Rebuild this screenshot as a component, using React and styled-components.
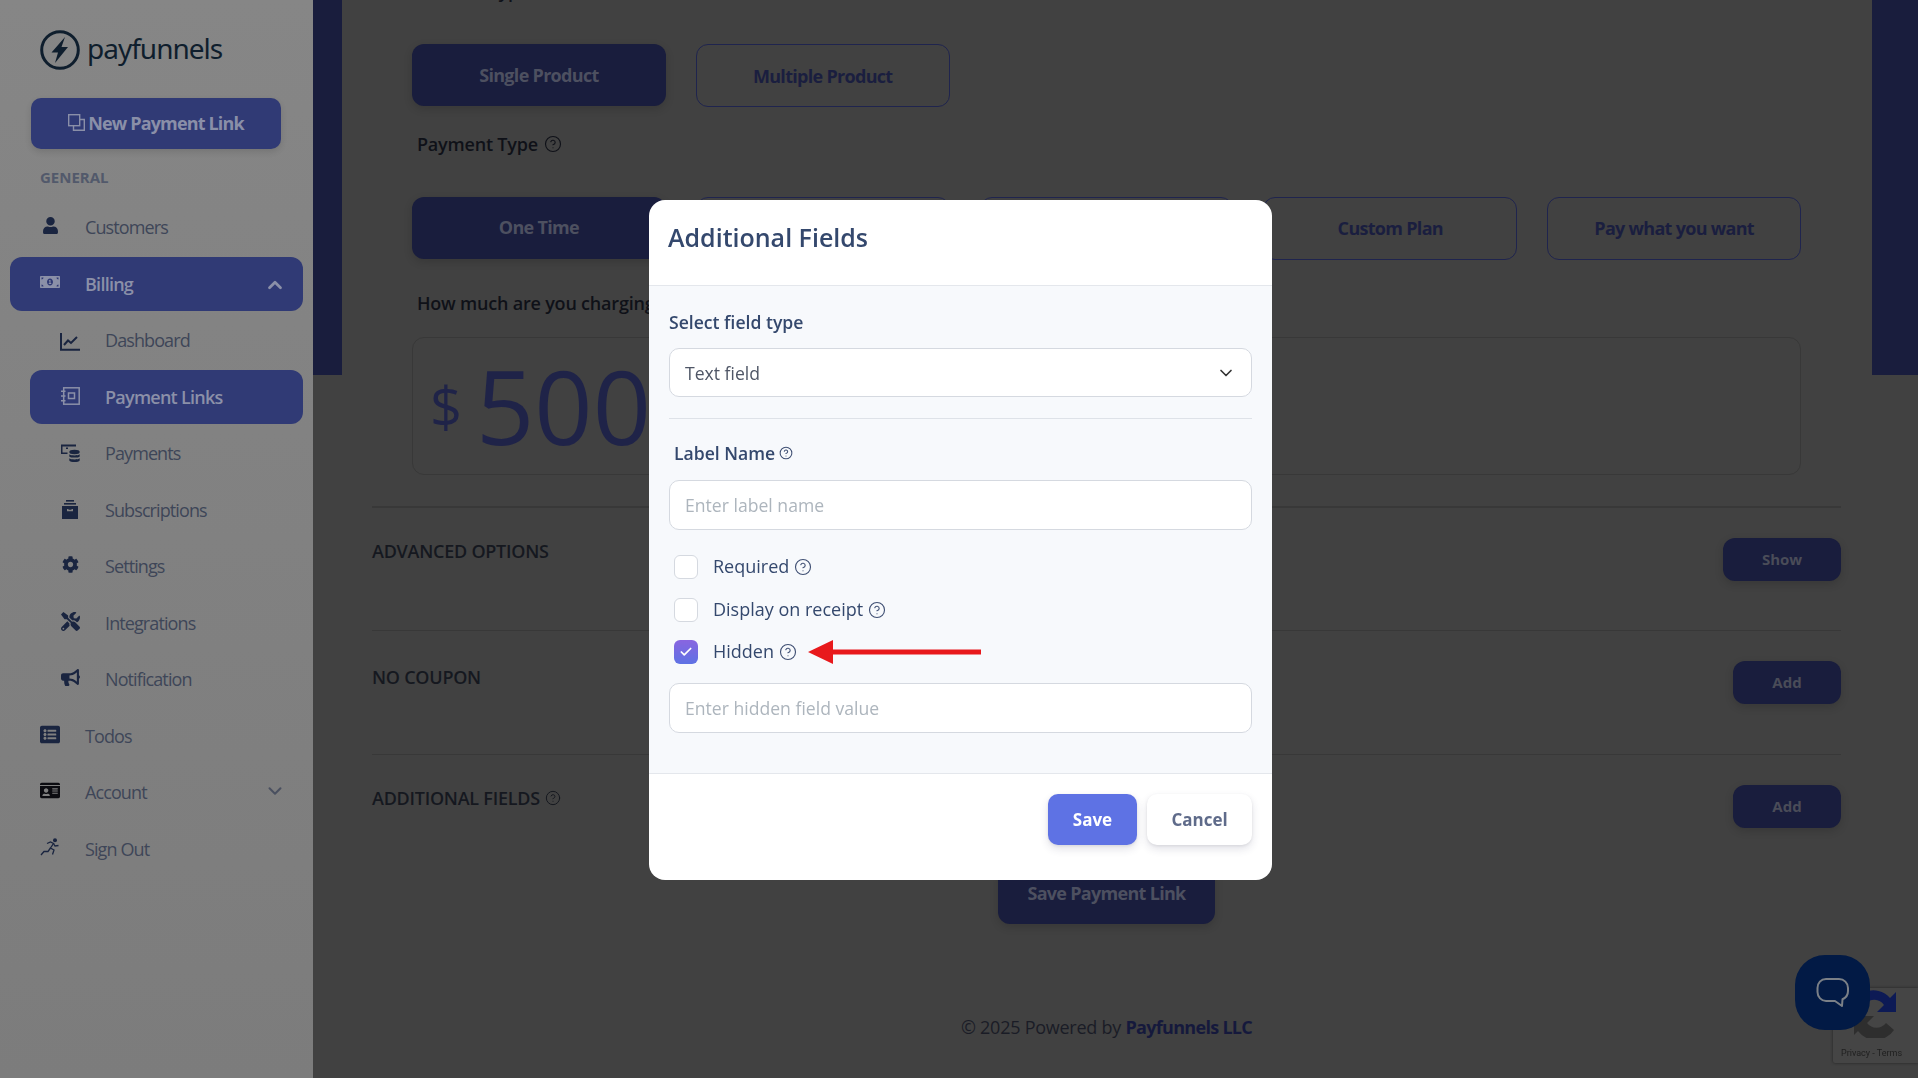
import React from 'react'
import styled, { createGlobalStyle } from 'styled-components'
import {
  FaUser,
  FaMoneyBillAlt,
  FaCog,
  FaTools,
  FaBullhorn,
  FaListAlt,
  FaIdCard,
} from 'react-icons/fa'
import { ChevronDown, ChevronUp, CircleHelp, Check } from 'lucide-react'

const GlobalStyle = createGlobalStyle`
  html, body {
    margin: 0;
    height: 100%;
    overflow: hidden;
    background: #414141;
  }
  * { box-sizing: border-box; }
  body {
    font-family: 'Open Sans', 'Noto Sans', sans-serif;
  }
`

const BAND = '#191d3d'
const DIM_BLUE = '#303a75'

const Page = styled.div`
  display: flex;
  width: 1918px;
  height: 1078px;
  overflow: hidden;
`

const Sidebar = styled.aside`
  flex: 0 0 313px;
  display: flex;
  flex-direction: column;
  background: linear-gradient(#868686, #7c7c7c);
  padding-top: 30px;
`

const Logo = styled.div`
  display: flex;
  align-items: center;
  gap: 7px;
  height: 40px;
  margin-left: 40px;
`

const LogoText = styled.span`
  font-family: 'Noto Sans', sans-serif;
  font-size: 28px;
  line-height: 40px;
  letter-spacing: -1px;
  margin-top: -4px;
  color: #0f1e2d;
`

const NewLinkButton = styled.div`
  display: flex;
  align-items: center;
  justify-content: center;
  gap: 3px;
  width: 250px;
  height: 51px;
  margin: 28px 0 0 31px;
  padding-bottom: 2px;
  background: ${DIM_BLUE};
  border-radius: 10px;
  box-shadow: 0 3px 6px rgba(0, 0, 0, 0.12);
  color: #8a8fa8;
  font-size: 18px;
  font-weight: 700;
  letter-spacing: -0.85px;
`

const SectionTitle = styled.div`
  margin: 18px 0 12px 40px;
  font-size: 15px;
  line-height: 21px;
  font-weight: 700;
  color: #52596b;
`

const NavItem = styled.div`
  display: flex;
  align-items: center;
  height: 54px;
  margin: 0 10px 2.5px ${(p) => (p.$sub ? '30px' : '10px')};
  padding: 0 17px 0 30px;
  border-radius: 12px;
  background: ${(p) => (p.$active ? DIM_BLUE : 'transparent')};
  color: ${(p) => (p.$active ? '#8b90a8' : '#3e4658')};
  font-size: 18px;
  font-weight: ${(p) => (p.$active ? 600 : 400)};
  letter-spacing: ${(p) => (p.$active ? '-0.75px' : '-0.9px')};
`

const NavIcon = styled.span`
  display: flex;
  align-items: center;
  justify-content: center;
  flex: 0 0 20px;
  min-width: 0;
  height: 20px;
  margin: -3px 25px 0 0;
  color: ${(p) => p.$color || '#1a2540'};
`

const NavChevron = styled.span`
  display: flex;
  margin: ${(p) => (p.$active ? '3px' : '-3px')} 0 0 auto;
  color: ${(p) => (p.$active ? '#8b90a8' : '#4a5060')};
`

const Main = styled.main`
  flex: 1;
  background: linear-gradient(${BAND}, ${BAND}) no-repeat top / 100% 375px, #414141;
  padding: 0 46px 0 29px;
`

const Panel = styled.div`
  background: #414141;
  padding: 0 31px 0 30px;
  margin-top: -21px;
  height: calc(100% + 21px);
`

const TopBlock = styled.div`
  padding: 0 40px;
`

const FieldLabel = styled.div`
  display: flex;
  align-items: center;
  gap: 6px;
  height: 24px;
  margin: ${(p) => p.$margin};
  padding-left: 5px;
  color: #0f1118;
  font-size: 18px;
  font-weight: 600;
  letter-spacing: -0.2px;
`

const ChoiceRow = styled.div`
  display: flex;
  align-items: flex-start;
  gap: 30px;
  height: 63px;
`

const Choice = styled.div`
  flex: 0 0 253.8px;
  display: flex;
  align-items: center;
  justify-content: center;
  height: ${(p) => (p.$selected ? '62px' : '63px')};
  padding-bottom: ${(p) => (p.$lift ? '2px' : '0')};
  border-radius: 12px;
  border: ${(p) => (p.$selected ? 'none' : '1px solid #1f244e')};
  background: ${(p) => (p.$selected ? BAND : 'transparent')};
  box-shadow: ${(p) => (p.$selected ? '0 3px 8px rgba(0, 0, 0, 0.15)' : 'none')};
  color: ${(p) => (p.$selected ? '#4d5060' : '#1a1e3f')};
  font-size: 18px;
  font-weight: 700;
  letter-spacing: -0.7px;
`

const AmountBox = styled.div`
  display: flex;
  align-items: center;
  height: 138px;
  margin-top: 22px;
  padding-left: 17px;
  border: 1px solid #383838;
  border-radius: 12px;
  color: #1f2348;
`

const Currency = styled.span`
  font-size: 56px;
  margin-right: 14px;
`

const Amount = styled.span`
  font-size: 102px;
  line-height: 138px;
`

const OptionRow = styled.div`
  display: flex;
  align-items: flex-start;
  justify-content: space-between;
  height: ${(p) => p.$height};
  margin-top: ${(p) => p.$top || 0};
  padding-top: 30px;
  border-top: ${(p) => p.$border || '1px'} solid #383838;
`

const OptionLabel = styled.div`
  display: flex;
  align-items: center;
  gap: 5px;
  margin-top: ${(p) => p.$drop};
  line-height: 24px;
  color: #15181f;
  font-size: 18px;
  font-weight: 600;
  letter-spacing: -0.25px;
`

const OptionButton = styled.div`
  display: flex;
  align-items: center;
  justify-content: center;
  width: ${(p) => p.$width};
  height: 43px;
  padding-bottom: 2px;
  border-radius: 12px;
  background: ${BAND};
  box-shadow: 0 3px 8px rgba(0, 0, 0, 0.15);
  color: #4a4c58;
  font-size: 15px;
  font-weight: 700;
`

const SaveLinkButton = styled.div`
  display: flex;
  align-items: center;
  justify-content: center;
  width: 217px;
  height: 62px;
  margin: 0 auto;
  border-radius: 12px;
  background: ${BAND};
  box-shadow: 0 3px 8px rgba(0, 0, 0, 0.15);
  color: #4d5060;
  font-size: 18px;
  font-weight: 700;
  letter-spacing: -0.7px;
`

const Footer = styled.footer`
  margin-top: 91px;
  text-align: center;
  font-size: 18px;
  line-height: 24px;
  letter-spacing: -0.25px;
  color: #1a1c26;

  b {
    color: #15193c;
    font-weight: 700;
    letter-spacing: -0.7px;
  }
`

const Modal = styled.div`
  position: fixed;
  left: 649px;
  top: 200px;
  width: 623px;
  height: 680px;
  display: flex;
  flex-direction: column;
  overflow: hidden;
  background: #fff;
  border-radius: 16px;
`

const ModalHeader = styled.div`
  flex: 0 0 86px;
  display: flex;
  align-items: flex-start;
  padding: 19px 19px 0;
  border-bottom: 1px solid #e4e7ec;
`

const ModalTitle = styled.h2`
  margin: 0;
  font-size: 25px;
  line-height: 36px;
  font-weight: 600;
  color: #34486d;
`

const ModalBody = styled.div`
  flex: 1;
  padding: 24px 20px 0;
  background: #f7f9fc;
`

const ModalLabel = styled.div`
  display: flex;
  align-items: center;
  gap: 4px;
  height: 24px;
  padding-left: ${(p) => (p.$inset ? '5px' : '0')};
  font-size: 17.6px;
  font-weight: 600;
  color: #34486d;
`

const SelectBox = styled.div`
  display: flex;
  align-items: center;
  justify-content: space-between;
  height: 49px;
  margin-top: 14px;
  padding: 0 15px;
  background: #fff;
  border: 1px solid #d5d9e0;
  border-radius: 10px;
  font-size: 17.6px;
  color: #4f5666;
`

const Rule = styled.hr`
  margin: 21px 0 22px;
  border: 0;
  border-top: 1px solid #dee2e8;
`

const TextInput = styled.input`
  display: block;
  width: 100%;
  height: 50px;
  margin-top: ${(p) => p.$top};
  padding: 0 15px;
  background: #fff;
  border: 1px solid #d5d9e0;
  border-radius: 10px;
  font-family: inherit;
  font-size: 17.6px;

  &::placeholder {
    color: #adb5bd;
    opacity: 1;
  }
`

const CheckList = styled.div`
  margin-top: 16px;
  padding-left: 5px;
`

const CheckRow = styled.div`
  display: flex;
  align-items: center;
  height: 42.5px;
  color: #34486d;
  font-size: 18px;
  font-weight: 500;
`

const CheckText = styled.span`
  margin-top: -2px;
`

const CheckBox = styled.span`
  display: flex;
  align-items: center;
  justify-content: center;
  flex: 0 0 24px;
  height: 24px;
  margin-right: 15px;
  border-radius: 6px;
  border: ${(p) => (p.$checked ? 'none' : '1px solid #d5d9e0')};
  background: ${(p) =>
    p.$checked ? 'linear-gradient(#8965e0, #5e72e4)' : '#fff'};
  color: #fff;
`

const Help = styled(CircleHelp)`
  flex: none;
  margin-left: ${(p) => p.$gap || '5px'};
  color: #3f4f73;
`

const RedArrow = styled.svg`
  flex: none;
  margin-left: 11px;
`

const ModalFooter = styled.div`
  flex: 0 0 107px;
  display: flex;
  justify-content: flex-end;
  gap: 10px;
  padding: 20px 20px 0;
  border-top: 1px solid #e4e7ec;
`

const ModalButton = styled.div`
  display: flex;
  align-items: center;
  justify-content: center;
  width: ${(p) => p.$width};
  height: 51px;
  border-radius: 10px;
  background: ${(p) => (p.$primary ? '#5e72e4' : '#fff')};
  box-shadow: 0 4px 8px rgba(50, 50, 93, 0.14), 0 1px 3px rgba(0, 0, 0, 0.08);
  color: ${(p) => (p.$primary ? '#fff' : '#5f6b8a')};
  font-size: 17px;
  font-weight: 700;
`

const Recaptcha = styled.div`
  position: fixed;
  left: 1833px;
  top: 988px;
  width: 85px;
  height: 75px;
  display: flex;
  flex-direction: column;
  align-items: center;
  background: #454545;
  border-radius: 2px 0 0 2px;
  box-shadow: 0 0 3px rgba(0, 0, 0, 0.5);
`

const RecaptchaLinks = styled.div`
  position: absolute;
  bottom: 3px;
  left: 8px;
  font-family: 'Roboto', sans-serif;
  font-size: 9px;
  line-height: 14px;
  white-space: nowrap;
  color: #1f1f1f;
`

const ChatBubble = styled.div`
  position: fixed;
  left: 1795px;
  top: 955px;
  width: 75px;
  height: 75px;
  display: flex;
  align-items: center;
  justify-content: center;
  border-radius: 30px;
  background: #021a45;
`

const ChartIcon = () => (
  <svg width="20" height="18" viewBox="0 0 20 18" fill="none" stroke="currentColor" style={{ marginTop: 6 }}>
    <path d="M1 0v16.800h19" strokeWidth="2" />
    <path d="M4 12l4-4.500 3 2.500 6-6" strokeWidth="2" />
  </svg>
)

const PaymentLinkIcon = () => (
  <svg width="19" height="18" viewBox="0 0 19 18" fill="none" stroke="currentColor" style={{ marginTop: 2 }}>
    <rect x="2.700" y="0.800" width="15.500" height="16.400" strokeWidth="1.500" />
    <rect x="7.500" y="6" width="6" height="5.500" strokeWidth="1.500" />
    <path d="M0 4.200h4.500M0 9h4.500M0 13.800h4.500" strokeWidth="1.500" />
  </svg>
)

const PaymentsIcon = () => (
  <svg width="19" height="19" viewBox="0 0 19 19" fill="currentColor" style={{ marginTop: 3 }}>
    <path d="M0 0.500h15v2H1.500v6h5v1.500H0z" />
    <rect x="5" y="3.500" width="2" height="1.500" />
    <ellipse cx="13.500" cy="8" rx="5.200" ry="2.200" />
    <path d="M8.300 10.200c1 1.600 9.400 1.600 10.400 0v2.200c-1 1.600-9.400 1.600-10.400 0z" />
    <path d="M8.300 14.200c1 1.600 9.400 1.600 10.400 0v2.400c-1 2-9.400 2-10.400 0z" />
  </svg>
)

const ArchiveIcon = () => (
  <svg width="16" height="19" viewBox="0 0 16 19" fill="currentColor" style={{ marginTop: 3 }}>
    <rect x="4" y="0" width="8" height="1.600" />
    <rect x="2" y="3" width="12" height="1.600" />
    <path d="M0 6h16v13H0zM5 9v2.200h6V9H9.500v.8h-3V9z" fillRule="evenodd" />
  </svg>
)

const RunnerIcon = () => (
  <svg width="20" height="18" viewBox="0 0 20 18" fill="none" stroke="currentColor" strokeWidth="1.300">
    <circle cx="15" cy="2.200" r="2" fill="currentColor" stroke="none" />
    <path d="M7 5.500l3.500-1.500 3 1.500-3 4.500 3.500 2-1.500 4.500" />
    <path d="M13.500 5.500l1.500 2.500 3.500-.5" />
    <path d="M10.500 10l-2.500 3.500H4L1 17" />
  </svg>
)

const NewLinkIcon = () => (
  <svg width="17" height="17" viewBox="0 0 17 17" fill="none" stroke="currentColor" strokeWidth="1.400">
    <rect x="0.700" y="0.700" width="11" height="11" />
    <path d="M5.500 11.700v4.600h10.800V5.500h-4.600" />
  </svg>
)

const LogoMark = () => (
  <svg width="40" height="40" viewBox="0 0 40 40">
    <circle cx="20" cy="20" r="18.300" fill="none" stroke="#0f1e2d" strokeWidth="3" />
    <path d="M25 7 11.500 22.500h6.500L15 33 28 17h-6.500z" fill="#0f1e2d" />
  </svg>
)

const ChatIcon = () => (
  <svg width="34" height="32" viewBox="0 0 34 32" fill="none" stroke="#7b8087" strokeWidth="2">
    <path d="M10 2h13c5 0 9 4 9 9v3c0 4-2.500 7-5.500 8.200L26 29l-7-5H10c-4.500 0-8.500-4-8.500-9V11C1.500 6 5 2 10 2z" strokeLinejoin="round" />
  </svg>
)

const RecaptchaIcon = () => (
  <svg width="50" height="50" viewBox="0 0 50 50">
    <path d="M14 4a22 22 0 0 1 25 6l6-6v20H26l7-7a12 12 0 0 0-19-1z" fill="#0d1a55" />
    <path d="M3 28h20l-7 7a12 12 0 0 0 19 0l8 7a22 22 0 0 1-36 1l-4 4z" fill="#2e2e2e" />
    <path d="M14 4 4 26h10l2-10z" fill="#1d3a78" />
  </svg>
)

const NAV_TOP = [
  { label: 'Customers', icon: <FaUser size={17} /> },
  {
    label: 'Billing',
    icon: <FaMoneyBillAlt size={22} />,
    active: true,
    iconColor: '#8b90a8',
    chevron: 'up',
  },
]

const NAV_SUB = [
  { label: 'Dashboard', icon: <ChartIcon /> },
  { label: 'Payment Links', icon: <PaymentLinkIcon />, active: true, iconColor: '#8b90a8' },
  { label: 'Payments', icon: <PaymentsIcon /> },
  { label: 'Subscriptions', icon: <ArchiveIcon /> },
  { label: 'Settings', icon: <FaCog size={17} /> },
  { label: 'Integrations', icon: <FaTools size={19} /> },
  { label: 'Notification', icon: <FaBullhorn size={19} /> },
]

const NAV_BOTTOM = [
  { label: 'Todos', icon: <FaListAlt size={21} /> },
  { label: 'Account', icon: <FaIdCard size={21} />, iconColor: '#0b0b10', chevron: 'down' },
  { label: 'Sign Out', icon: <RunnerIcon /> },
]

const renderNav = (item, sub) => (
  <NavItem key={item.label} $sub={sub} $active={item.active}>
    <NavIcon $color={item.iconColor}>{item.icon}</NavIcon>
    {item.label}
    {item.chevron && (
      <NavChevron $active={item.active}>
        {item.chevron === 'up' ? (
          <ChevronUp size={22} strokeWidth={3} />
        ) : (
          <ChevronDown size={22} strokeWidth={2.2} />
        )}
      </NavChevron>
    )}
  </NavItem>
)

const PAYMENT_TYPES = ['One Time', 'Subscription', 'Payment Plan', 'Custom Plan', 'Pay what you want']

export default function App() {
  return (
    <>
      <GlobalStyle />
      <Page>
        <Sidebar>
          <Logo>
            <LogoMark />
            <LogoText>payfunnels</LogoText>
          </Logo>
          <NewLinkButton>
            <NewLinkIcon />
            New Payment Link
          </NewLinkButton>
          <SectionTitle>GENERAL</SectionTitle>
          {NAV_TOP.map((item) => renderNav(item))}
          {NAV_SUB.map((item) => renderNav(item, true))}
          {NAV_BOTTOM.map((item) => renderNav(item))}
        </Sidebar>

        <Main>
          <Panel>
            <TopBlock>
              <FieldLabel $margin="0 0 41px">
                Product Type
                <CircleHelp size={18} strokeWidth={1.5} />
              </FieldLabel>
              <ChoiceRow>
                <Choice $selected>Single Product</Choice>
                <Choice>Multiple Product</Choice>
              </ChoiceRow>
              <FieldLabel $margin="25px 0 41px">
                Payment Type
                <CircleHelp size={18} strokeWidth={1.5} />
              </FieldLabel>
              <ChoiceRow>
                {PAYMENT_TYPES.map((type, i) => (
                  <Choice key={type} $selected={i === 0} $lift>
                    {type}
                  </Choice>
                ))}
              </ChoiceRow>
              <FieldLabel $margin="31px 0 0">How much are you charging?</FieldLabel>
              <AmountBox>
                <Currency>$</Currency>
                <Amount>500</Amount>
              </AmountBox>
            </TopBlock>

            <OptionRow $height="124px" $top="31px" $border="2px">
              <OptionLabel $drop="1px">ADVANCED OPTIONS</OptionLabel>
              <OptionButton $width="118px">Show</OptionButton>
            </OptionRow>
            <OptionRow $height="124px">
              <OptionLabel $drop="4px">NO COUPON</OptionLabel>
              <OptionButton $width="108px">Add</OptionButton>
            </OptionRow>
            <OptionRow $height="108px">
              <OptionLabel $drop="1px">
                ADDITIONAL FIELDS
                <CircleHelp size={16} strokeWidth={1.5} />
              </OptionLabel>
              <OptionButton $width="108px">Add</OptionButton>
            </OptionRow>

            <SaveLinkButton>Save Payment Link</SaveLinkButton>
            <Footer>
              © 2025 Powered by <b>Payfunnels LLC</b>
            </Footer>
          </Panel>
        </Main>
      </Page>

      <Recaptcha>
        <RecaptchaIcon />
        <RecaptchaLinks>Privacy - Terms</RecaptchaLinks>
      </Recaptcha>
      <ChatBubble>
        <ChatIcon />
      </ChatBubble>

      <Modal>
        <ModalHeader>
          <ModalTitle>Additional Fields</ModalTitle>
        </ModalHeader>
        <ModalBody>
          <ModalLabel>Select field type</ModalLabel>
          <SelectBox>
            Text field
            <ChevronDown size={20} color="#333" />
          </SelectBox>
          <Rule />
          <ModalLabel $inset>
            Label Name
            <Help size={14} $gap="0" strokeWidth={1.8} />
          </ModalLabel>
          <TextInput $top="15px" placeholder="Enter label name" readOnly />
          <CheckList>
            <CheckRow>
              <CheckBox />
              <CheckText>Required</CheckText>
              <Help size={18} strokeWidth={1.5} />
            </CheckRow>
            <CheckRow>
              <CheckBox />
              <CheckText>Display on receipt</CheckText>
              <Help size={18} strokeWidth={1.5} />
            </CheckRow>
            <CheckRow>
              <CheckBox $checked>
                <Check size={14} strokeWidth={3} />
              </CheckBox>
              <CheckText>Hidden</CheckText>
              <Help size={18} strokeWidth={1.5} />
              <RedArrow width="173" height="26" viewBox="0 0 173 26">
                <path d="M0 13 25 1v9.500h148v5H25V25z" fill="#e8191c" />
              </RedArrow>
            </CheckRow>
          </CheckList>
          <TextInput $top="9px" placeholder="Enter hidden field value" readOnly />
        </ModalBody>
        <ModalFooter>
          <ModalButton $primary $width="89px">
            Save
          </ModalButton>
          <ModalButton $width="105px">Cancel</ModalButton>
        </ModalFooter>
      </Modal>
    </>
  )
}
